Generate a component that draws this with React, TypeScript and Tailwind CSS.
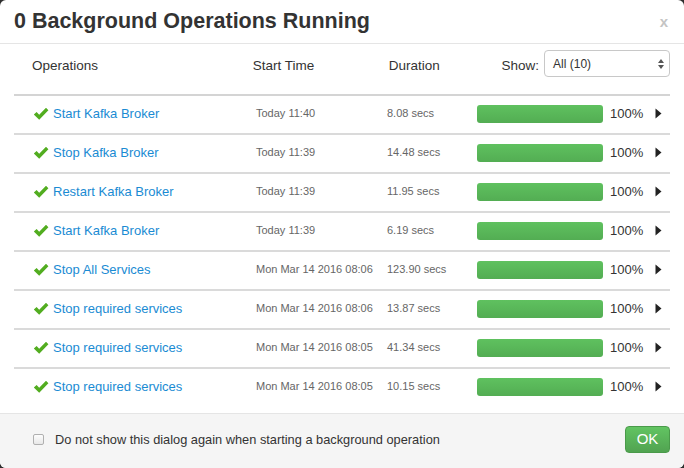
import React from "react";

const rows = [
  ["Start Kafka Broker", "Today 11:40", "8.08 secs"],
  ["Stop Kafka Broker", "Today 11:39", "14.48 secs"],
  ["Restart Kafka Broker", "Today 11:39", "11.95 secs"],
  ["Start Kafka Broker", "Today 11:39", "6.19 secs"],
  ["Stop All Services", "Mon Mar 14 2016 08:06", "123.90 secs"],
  ["Stop required services", "Mon Mar 14 2016 08:06", "13.87 secs"],
  ["Stop required services", "Mon Mar 14 2016 08:05", "41.34 secs"],
  ["Stop required services", "Mon Mar 14 2016 08:05", "10.15 secs"],
];

function Check() {
  return (
    <svg width="16" height="14" viewBox="0 0 16 14" className="shrink-0">
      <path d="M0.8 7.6 L3.6 5 L6.2 7.7 L13 0.8 L15.4 3.3 L6.2 12.8 Z" fill="#52ad20" />
    </svg>
  );
}

function Arrow() {
  return (
    <svg width="7" height="11" viewBox="0 0 7 11">
      <path d="M0.5 0.5 L6.5 5.5 L0.5 10.5 Z" fill="#222" />
    </svg>
  );
}

export default function App() {
  return (
    <div
      className="w-[684px] h-[468px] bg-[#2e2e2e]"
      style={{ fontFamily: '"Liberation Sans", Arial, sans-serif' }}
    >
      <div className="w-full h-full bg-white rounded-[6px] overflow-hidden flex flex-col">
        {/* Header */}
        <div className="h-[44px] shrink-0 border-b border-[#e5e5e5] flex items-center justify-between pl-[14px] pr-[16px]">
          <div className="text-[21.5px] font-bold text-[#333] leading-none">
            0 Background Operations Running
          </div>
          <div className="text-[15px] font-bold text-[#c4c4c4] leading-none">x</div>
        </div>

        {/* Body */}
        <div className="flex-1 px-[14px]">
          <div className="h-[50px] pb-[6px] flex items-center text-[13.5px] text-[#333]">
            <div className="pl-[18px] w-[239px]">Operations</div>
            <div className="w-[136px]">Start Time</div>
            <div className="w-[113px]">Duration</div>
            <div className="mr-[5px]">Show:</div>
            <div className="w-[126px] h-[27px] border border-[#c8c8c8] rounded-[4px] flex items-center justify-between pl-[8px] pr-[5px] text-[12px] text-[#333] mt-[-5px]">
              <span>All (10)</span>
              <svg width="6" height="10" viewBox="0 0 6 10">
                <path d="M3 0 L6 4 L0 4 Z M0 6 L6 6 L3 10 Z" fill="#555" />
              </svg>
            </div>
          </div>
          <div className="border-t-2 border-[#d4d4d4]">
            {rows.map((r, i) => (
              <div
                key={i}
                className={
                  "h-[39px] flex items-center " +
                  (i < rows.length - 1 ? "border-b-2 border-[#dadada] pb-[2px]" : "pb-[4px]")
                }
              >
                <div className="w-[242px] pl-[19px] flex items-center gap-[4px]">
                  <Check />
                  <span className="text-[13px] text-[#1a8bd3]">{r[0]}</span>
                </div>
                <div className="w-[131px] text-[11px] text-[#666]">{r[1]}</div>
                <div className="w-[90px] text-[11px] text-[#666]">{r[2]}</div>
                <div className="w-[126px] h-[18px] rounded-[3px] bg-[linear-gradient(#5fc15f,#53ad53)]" />
                <div className="w-[52px] pl-[7px] text-[13px] text-[#333]">100%</div>
                <Arrow />
              </div>
            ))}
          </div>
        </div>

        {/* Footer */}
        <div className="h-[55px] shrink-0 bg-[#f5f5f5] border-t border-[#e5e5e5] flex items-center justify-between pl-[33px] pr-[14px] pb-[3px]">
          <div className="flex items-center gap-[11px]">
            <div className="w-[11px] h-[11px] rounded-[2px] border border-[#b0b0b0] bg-[linear-gradient(#fdfdfd,#e8e8e8)]" />
            <span className="text-[12.8px] text-[#333]">
              Do not show this dialog again when starting a background operation
            </span>
          </div>
          <div className="w-[45px] h-[27px] rounded-[4px] bg-[linear-gradient(#62c462,#51a351)] border border-[#4a9a4a] flex items-center justify-center text-white text-[15px]">
            OK
          </div>
        </div>
      </div>
    </div>
  );
}
